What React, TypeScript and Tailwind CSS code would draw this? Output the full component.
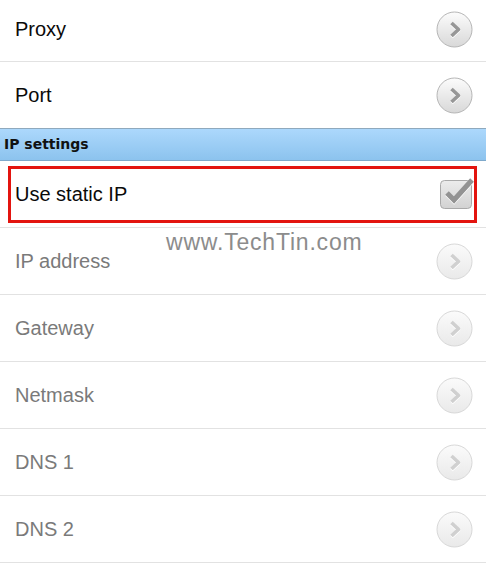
import React from "react";

// ----------------------------------------------------------------------

function Chevron({ disabled }: { disabled?: boolean }) {
  const id = disabled ? "chev-off" : "chev-on";
  return (
    <svg width="37" height="37" viewBox="0 0 37 37">
      <defs>
        <linearGradient id={id} x1="0" y1="0" x2="0" y2="1">
          <stop offset="0" stopColor={disabled ? "#fbfbfb" : "#fcfcfc"} />
          <stop offset="1" stopColor={disabled ? "#e9e9e9" : "#d8d8d8"} />
        </linearGradient>
      </defs>
      <circle
        cx="18.5"
        cy="18.5"
        r="17.5"
        fill={`url(#${id})`}
        stroke={disabled ? "#d8d8d8" : "#b6b6b6"}
        strokeWidth="1"
      />
      <path
        d="M15.5 12 L22.5 18.5 L15.5 25"
        fill="none"
        stroke="#ffffff"
        strokeWidth="3.6"
        strokeLinejoin="round"
        transform="translate(0 1)"
      />
      <path
        d="M15.5 12 L22.5 18.5 L15.5 25"
        fill="none"
        stroke={disabled ? "#d0d0d0" : "#979797"}
        strokeWidth="3.6"
        strokeLinejoin="round"
      />
    </svg>
  );
}

function CheckBox() {
  return (
    <svg width="36" height="33" viewBox="0 0 36 33">
      <defs>
        <linearGradient id="cb" x1="0" y1="0" x2="0" y2="1">
          <stop offset="0" stopColor="#ececec" />
          <stop offset="1" stopColor="#d2d2d2" />
        </linearGradient>
      </defs>
      <rect x="1.5" y="3.5" width="31" height="28" rx="4" fill="url(#cb)" stroke="#a9a9a9" />
      <path
        d="M8 16 L15 23 L33 3"
        fill="none"
        stroke="#ffffff"
        strokeWidth="5"
        transform="translate(0 1)"
      />
      <path d="M8 16 L15 23 L33 3" fill="none" stroke="#939393" strokeWidth="5" />
    </svg>
  );
}

export default function App() {
  const TOP = ["Proxy", "Port"];
  const FIELDS = ["IP address", "Gateway", "Netmask", "DNS 1", "DNS 2", ""];

  return (
    <div
      className="relative w-[486px] h-[574px] overflow-hidden bg-white"
      style={{ fontFamily: '"Liberation Sans", Arial, sans-serif' }}
    >
      <div className="flex flex-col -mt-[3px]">
        {TOP.map((label, i) => (
          <div
            key={label}
            className={
              i === 0
                ? "h-[65px] flex items-center justify-between pl-[15px] pr-[13px] border-b border-[#e2e2e2]"
                : "h-[66px] flex items-center justify-between pl-[15px] pr-[13px]"
            }
          >
            <span className="text-[20px] text-[#0a0a0a]">{label}</span>
            <Chevron />
          </div>
        ))}

        <div
          className="h-[33px] flex items-center pl-[4px] border-t border-b border-t-[#8fa9bd] border-b-[#7ea9cb] bg-linear-to-b from-[#acd8fc] to-[#8cc3ee]"
          style={{ fontFamily: '"DejaVu Sans", sans-serif' }}
        >
          <span className="text-[14px] font-bold text-[#111]">IP settings</span>
        </div>

        <div className="relative h-[67px] flex items-center justify-between pl-[15px] pr-[13px] border-b border-[#e2e2e2]">
          <span className="text-[20px] text-[#0a0a0a]">Use static IP</span>
          <div className="-mr-[2px] -mt-[2px]">
            <CheckBox />
          </div>
          <div className="absolute left-[8px] right-[9px] top-[5px] bottom-[4px] border-[3px] border-[#e3140f]" />
        </div>

        {FIELDS.map((label, i) => (
          <div
            key={i}
            className="h-[67px] flex items-center justify-between pl-[15px] pr-[13px] border-b border-[#e2e2e2]"
          >
            <span className="text-[20px] text-[#7a7a7a]">{label}</span>
            {label && <Chevron disabled />}
          </div>
        ))}
      </div>

      <span className="absolute left-[166px] top-[231px] text-[23px] leading-none tracking-[0.8px] text-[#8c8c8c]">
        www.TechTin.com
      </span>
    </div>
  );
}
